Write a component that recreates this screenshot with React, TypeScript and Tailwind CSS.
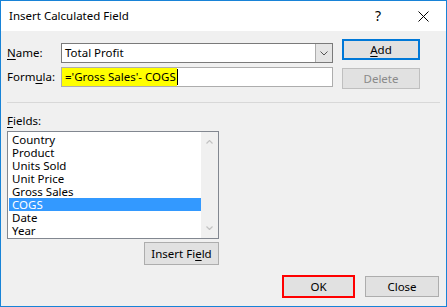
import React from "react";

const font = { fontFamily: '"Noto Sans", "Open Sans", sans-serif' };

function Btn({ children, className = "" }: { children: React.ReactNode; className?: string }) {
  return (
    <div className={`flex items-center justify-center bg-[#e1e1e1] text-[11.5px] ${className}`}>
      {children}
    </div>
  );
}

export default function App() {
  const fields = ["Country", "Product", "Units Sold", "Unit Price", "Gross Sales", "COGS", "Date", "Year"];
  return (
    <div className="w-[447px] h-[307px] border border-[#1883d7] flex flex-col bg-[#f0f0f0] text-black" style={font}>
      {/* Title bar */}
      <div className="h-[30px] bg-white flex items-center pl-[8px] shrink-0">
        <span className="text-[11.5px] leading-none">Insert Calculated Field</span>
        <span className="ml-auto text-[14px] leading-none mr-[37px] -mt-[1px]">?</span>
        <svg width="11" height="11" viewBox="0 0 11 11" className="mr-[17px]">
          <path d="M0.5 0.5 L10.5 10.5 M10.5 0.5 L0.5 10.5" stroke="#000" strokeWidth="1" />
        </svg>
      </div>

      {/* Body */}
      <div className="flex flex-col pl-[6px] text-[11.5px]">
        {/* top section */}
        <div className="flex mt-[8px]">
          <div className="flex flex-col">
            <div className="flex items-center mt-[4px] h-[20px]">
              <span className="w-[54px] leading-none"><span className="underline underline-offset-2">N</span>ame:</span>
              <div className="w-[272px] h-[20px] border border-[#7a7a7a] bg-white flex items-center">
                <span className="pl-[3px] flex-1 leading-none">Total Profit</span>
                <div className="w-[17px] h-[18px] bg-[#e5e5e5] border-l border-[#adadad] flex items-center justify-center">
                  <svg width="8" height="5" viewBox="0 0 8 5">
                    <path d="M0.5 0.5 L4 4 L7.5 0.5" stroke="#555" strokeWidth="1" fill="none" />
                  </svg>
                </div>
              </div>
            </div>
            <div className="flex items-center mt-[4px] h-[20px]">
              <span className="w-[54px] leading-none">Form<span className="underline underline-offset-2">u</span>la:</span>
              <div className="w-[272px] h-[20px] border border-[#adadad] bg-white flex items-stretch">
                <span className="bg-[#ffff00] flex items-center pl-[3px] pr-[1px] leading-none">
                  ='Gross Sales'- COGS
                </span>
                <span className="w-px bg-black my-[1px]" />
              </div>
            </div>
          </div>
          <div className="flex flex-col ml-[9px]">
            <Btn className="w-[78px] h-[21px] border-2 border-[#0078d7] text-black">
              <span><span className="underline underline-offset-2">A</span>dd</span>
            </Btn>
            <Btn className="w-[78px] h-[21px] mt-[8px] border border-[#bfbfbf] text-[#8a8a8a]">Delete</Btn>
          </div>
        </div>

        {/* separator */}
        <div className="mt-[13px] h-px w-[433px] bg-[#d8d8d8]" />

        {/* Fields */}
        <div className="mt-[10px] h-[15px] leading-[15px]">
          <span className="underline underline-offset-2">F</span>ields:
        </div>
        <div className="mt-[3px] w-[212px] h-[108px] border border-[#828790] bg-white flex">
          <div className="flex-1 flex flex-col pt-px pl-[1px]">
            {fields.map((f) => (
              <div
                key={f}
                className={`h-[13px] leading-[13px] pl-[3px] ${f === "COGS" ? "bg-[#3399ff] text-white" : ""}`}
              >
                {f}
              </div>
            ))}
          </div>
          <div className="w-[17px] bg-[#f0f0f0] flex flex-col items-center justify-between py-[8px]">
            <svg width="7" height="4" viewBox="0 0 7 4">
              <path d="M0.5 3.5 L3.5 0.5 L6.5 3.5" stroke="#c2c2c2" strokeWidth="1.2" fill="none" />
            </svg>
            <svg width="7" height="4" viewBox="0 0 7 4">
              <path d="M0.5 0.5 L3.5 3.5 L6.5 0.5" stroke="#c2c2c2" strokeWidth="1.2" fill="none" />
            </svg>
          </div>
        </div>

        <Btn className="mt-[3px] ml-[137px] w-[75px] h-[23px] border border-[#adadad] text-black">
          <span>Insert Fi<span className="underline underline-offset-2">e</span>ld</span>
        </Btn>

        <div className="flex items-center justify-end mt-[10px] pr-[7px]">
          <Btn className="w-[73px] h-[23px] border-2 border-[#ff0000] text-black">OK</Btn>
          <Btn className="ml-[10px] w-[74px] h-[21px] border border-[#adadad] text-black">Close</Btn>
        </div>
      </div>
    </div>
  );
}
